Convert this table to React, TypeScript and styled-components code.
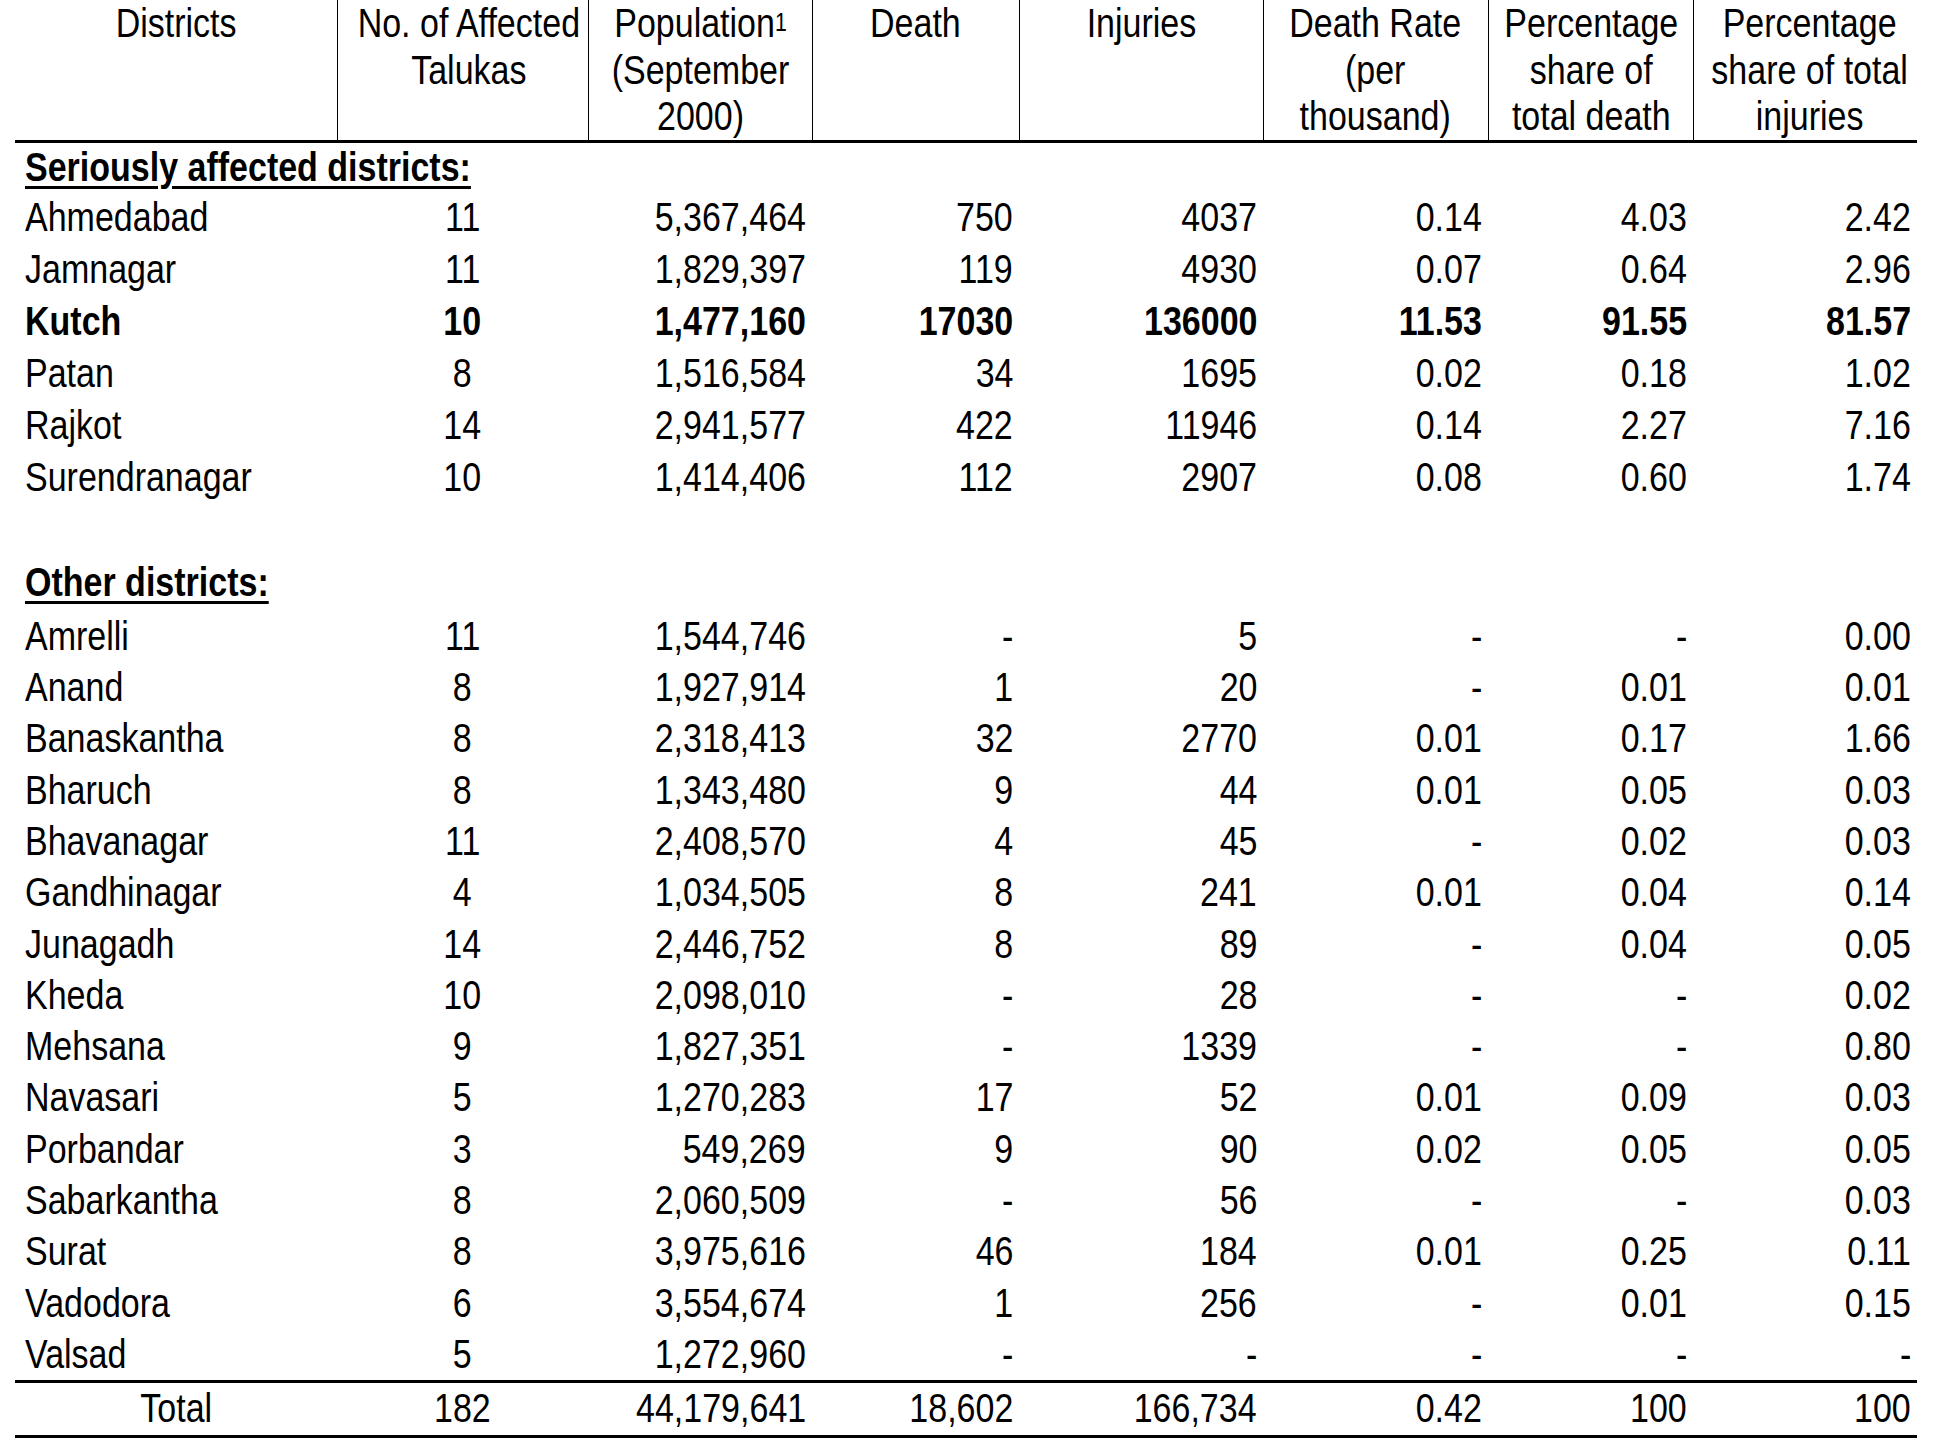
import React from "react";
import styled, { createGlobalStyle } from "styled-components";

const Global = createGlobalStyle`
  html, body {
    margin: 0;
    padding: 0;
    background: #ffffff;
  }
  body {
    font-family: "Liberation Sans", Arial, Helvetica, sans-serif;
    color: #000;
  }
`;

const Page = styled.div`
  padding: 0 19px 0 15px;
  overflow: hidden;
  height: 1444px;
`;

const Table = styled.table`
  width: 1902px;
  border-collapse: collapse;
  table-layout: fixed;
  font-size: 40px;
`;

type Align = "left" | "center" | "right";

/* The reference font is a condensed grotesque; Liberation Sans is narrowed to match. */
const Narrow = styled.span<{ $align: Align }>`
  display: inline-block;
  transform: scaleX(0.85);
  transform-origin: ${(p) => p.$align} center;
  text-align: ${(p) => p.$align};
`;

const HeadCell = styled.th<{ $first?: boolean }>`
  font-weight: 400;
  text-align: center;
  vertical-align: top;
  line-height: 46.5px;
  padding: 0;
  border-left: ${(p) => (p.$first ? "none" : "1.5px solid #000")};
  border-bottom: 3px solid #000;
  white-space: nowrap;
`;

const Sup = styled.span`
  font-size: 25px;
  vertical-align: 6px;
  line-height: 0;
`;

const BodyRow = styled.tr<{ $h: number }>`
  line-height: ${(p) => p.$h}px;
  height: ${(p) => p.$h}px;
`;

const TotalRow = styled.tr`
  line-height: 51.5px;
  height: 51.5px;
  border-top: 3px solid #000;
  border-bottom: 3px solid #000;
`;

const Cell = styled.td<{ $align: Align; $bold?: boolean }>`
  text-align: ${(p) => p.$align};
  font-weight: ${(p) => (p.$bold ? 700 : 400)};
  padding: ${(p) =>
    p.$align === "left" ? "0 0 0 10px" : p.$align === "right" ? "0 6px 0 0" : "0"};
  white-space: nowrap;
`;

const SectionCell = styled.td`
  font-weight: 700;
  padding: 0 0 0 10px;
  white-space: nowrap;
`;

const Underlined = styled.span`
  text-decoration: underline;
  text-decoration-thickness: 3px;
  text-underline-offset: 5px;
`;

const BlankCell = styled.td`
  padding: 0;
`;

const colWidths = [322, 251, 224, 207, 244, 225, 205, 224];

type Row = [string, string, string, string, string, string, string, string];

const serious: Row[] = [
  ["Ahmedabad", "11", "5,367,464", "750", "4037", "0.14", "4.03", "2.42"],
  ["Jamnagar", "11", "1,829,397", "119", "4930", "0.07", "0.64", "2.96"],
  ["Kutch", "10", "1,477,160", "17030", "136000", "11.53", "91.55", "81.57"],
  ["Patan", "8", "1,516,584", "34", "1695", "0.02", "0.18", "1.02"],
  ["Rajkot", "14", "2,941,577", "422", "11946", "0.14", "2.27", "7.16"],
  ["Surendranagar", "10", "1,414,406", "112", "2907", "0.08", "0.60", "1.74"],
];

const others: Row[] = [
  ["Amrelli", "11", "1,544,746", "-", "5", "-", "-", "0.00"],
  ["Anand", "8", "1,927,914", "1", "20", "-", "0.01", "0.01"],
  ["Banaskantha", "8", "2,318,413", "32", "2770", "0.01", "0.17", "1.66"],
  ["Bharuch", "8", "1,343,480", "9", "44", "0.01", "0.05", "0.03"],
  ["Bhavanagar", "11", "2,408,570", "4", "45", "-", "0.02", "0.03"],
  ["Gandhinagar", "4", "1,034,505", "8", "241", "0.01", "0.04", "0.14"],
  ["Junagadh", "14", "2,446,752", "8", "89", "-", "0.04", "0.05"],
  ["Kheda", "10", "2,098,010", "-", "28", "-", "-", "0.02"],
  ["Mehsana", "9", "1,827,351", "-", "1339", "-", "-", "0.80"],
  ["Navasari", "5", "1,270,283", "17", "52", "0.01", "0.09", "0.03"],
  ["Porbandar", "3", "549,269", "9", "90", "0.02", "0.05", "0.05"],
  ["Sabarkantha", "8", "2,060,509", "-", "56", "-", "-", "0.03"],
  ["Surat", "8", "3,975,616", "46", "184", "0.01", "0.25", "0.11"],
  ["Vadodora", "6", "3,554,674", "1", "256", "-", "0.01", "0.15"],
  ["Valsad", "5", "1,272,960", "-", "-", "-", "-", "-"],
];

const total: Row = ["Total", "182", "44,179,641", "18,602", "166,734", "0.42", "100", "100"];

const alignFor = (i: number): Align => (i === 0 ? "left" : i === 1 ? "center" : "right");

const DataRow: React.FC<{ row: Row; h: number; bold?: boolean }> = ({ row, h, bold }) => (
  <BodyRow $h={h}>
    {row.map((v, i) => (
      <Cell key={i} $align={alignFor(i)} $bold={bold}>
        <Narrow $align={alignFor(i)}>{v}</Narrow>
      </Cell>
    ))}
  </BodyRow>
);

const Head: React.FC<{ first?: boolean; children: React.ReactNode }> = ({ first, children }) => (
  <HeadCell $first={first}>
    <Narrow $align="center">{children}</Narrow>
  </HeadCell>
);

export default function App() {
  return (
    <>
      <Global />
      <Page>
        <Table>
          <colgroup>
            {colWidths.map((w, i) => (
              <col key={i} style={{ width: w }} />
            ))}
          </colgroup>
          <thead>
            <tr>
              <Head first>Districts</Head>
              <Head>
                No. of Affected
                <br />
                Talukas
              </Head>
              <Head>
                Population<Sup>1</Sup>
                <br />
                (September
                <br />
                2000)
              </Head>
              <Head>Death</Head>
              <Head>Injuries</Head>
              <Head>
                Death Rate
                <br />
                (per
                <br />
                thousand)
              </Head>
              <Head>
                Percentage
                <br />
                share of
                <br />
                total death
              </Head>
              <Head>
                Percentage
                <br />
                share of total
                <br />
                injuries
              </Head>
            </tr>
          </thead>
          <tbody>
            <BodyRow $h={48.3}>
              <SectionCell colSpan={8}>
                <Narrow $align="left">
                  <Underlined>Seriously affected districts:</Underlined>
                </Narrow>
              </SectionCell>
            </BodyRow>
            {serious.map((r) => (
              <DataRow key={r[0]} row={r} h={52} bold={r[0] === "Kutch"} />
            ))}
            <BodyRow $h={52.4}>
              <BlankCell colSpan={8} />
            </BodyRow>
            <BodyRow $h={55.6}>
              <SectionCell colSpan={8}>
                <Narrow $align="left">
                  <Underlined>Other districts:</Underlined>
                </Narrow>
              </SectionCell>
            </BodyRow>
            {others.map((r) => (
              <DataRow key={r[0]} row={r} h={51.3} />
            ))}
            <TotalRow>
              {total.map((v, i) => (
                <Cell key={i} $align={i < 2 ? "center" : "right"}>
                  <Narrow $align={i < 2 ? "center" : "right"}>{v}</Narrow>
                </Cell>
              ))}
            </TotalRow>
          </tbody>
        </Table>
      </Page>
    </>
  );
}
